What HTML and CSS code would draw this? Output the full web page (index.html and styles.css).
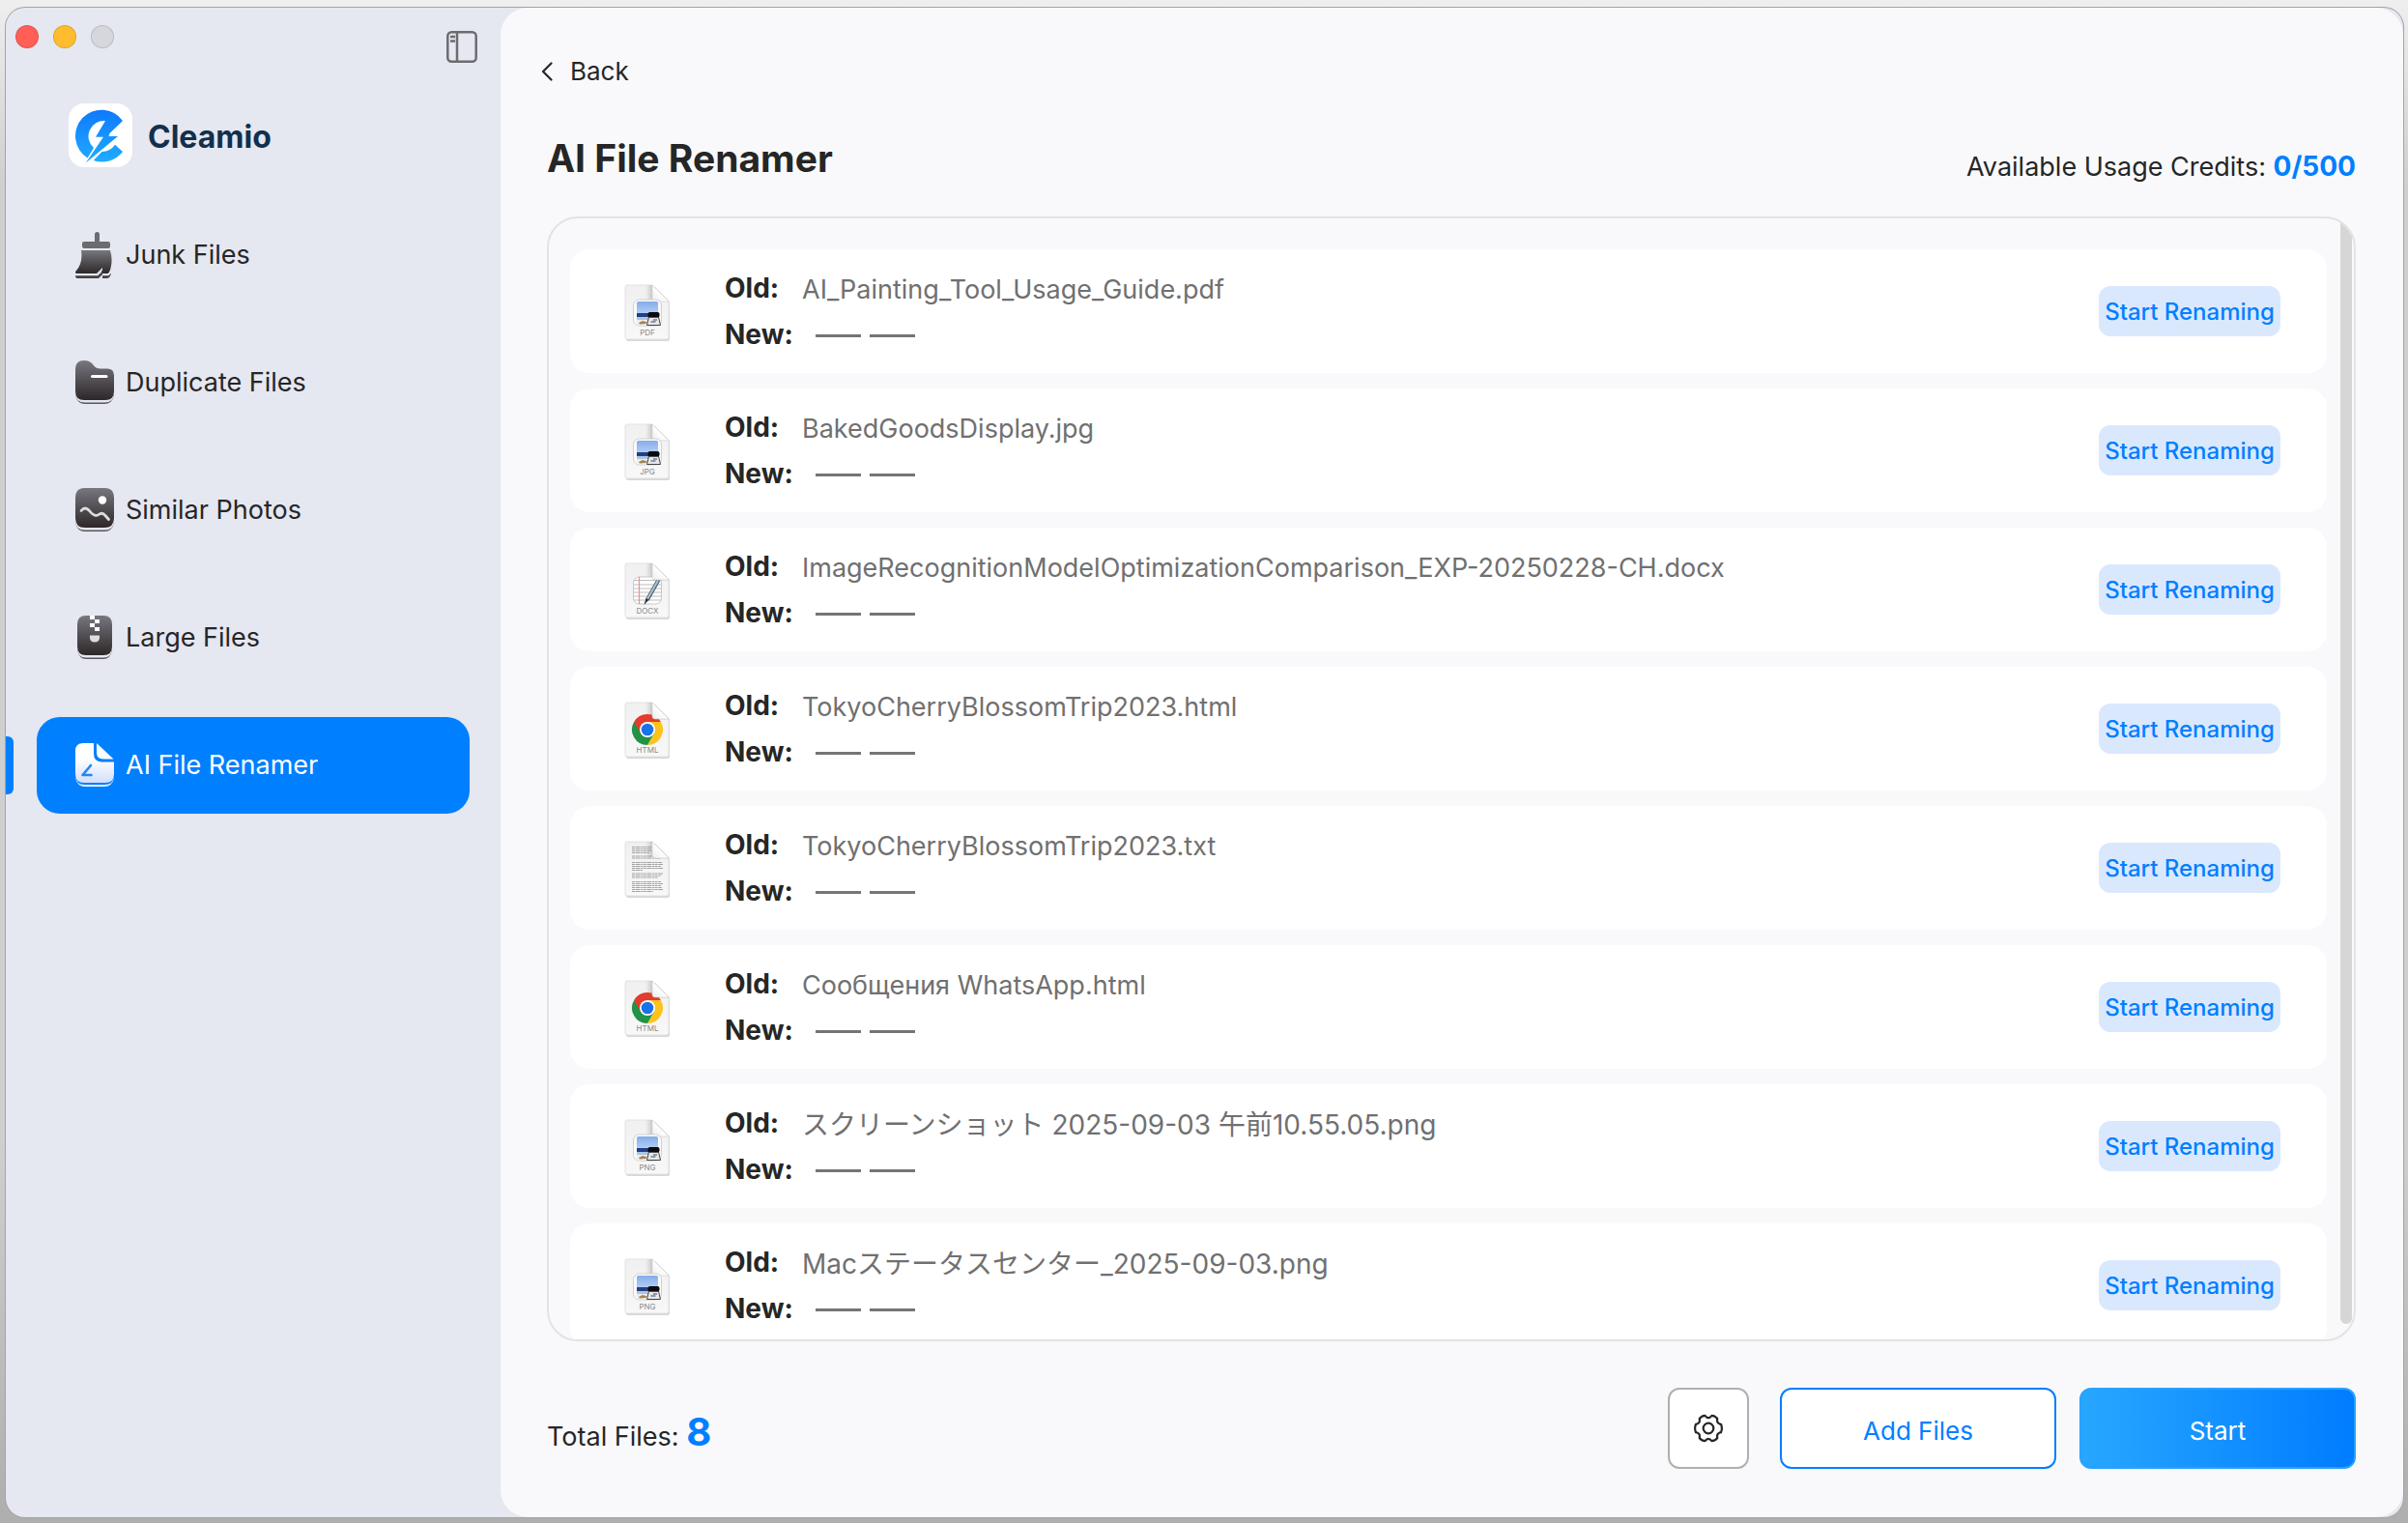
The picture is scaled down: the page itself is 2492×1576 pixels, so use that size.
FILE: index.html
```html
<!DOCTYPE html>
<html lang="en">
<head>
<meta charset="utf-8">
<title>Cleamio – AI File Renamer</title>
<link rel="stylesheet" href="styles.css">
</head>
<body>
<svg class="defs" aria-hidden="true">
  <defs>
    <linearGradient id="ink" x1="0" y1="0" x2="0" y2="1"><stop offset="0" stop-color="#77777f"/><stop offset="1" stop-color="#2d2728"/></linearGradient>
    <linearGradient id="snow" x1="0" y1="0" x2="0" y2="1"><stop offset="0" stop-color="#fff"/><stop offset=".4" stop-color="#fff"/><stop offset="1" stop-color="#d3defd"/></linearGradient>
    <linearGradient id="brand" gradientUnits="userSpaceOnUse" x1="0" y1="6" x2="0" y2="60"><stop offset="0" stop-color="#0f78fd"/><stop offset="1" stop-color="#1fabff"/></linearGradient>
    <linearGradient id="paper" x1="0" y1="0" x2="0" y2="1"><stop offset="0" stop-color="#f0f0f0"/><stop offset="1" stop-color="#f8f8f8"/></linearGradient>
    <linearGradient id="fold" x1="0" y1="1" x2="1" y2="0"><stop offset="0" stop-color="#ececec"/><stop offset=".5" stop-color="#fff"/></linearGradient>
    <linearGradient id="crease" x1="0" y1="0" x2="1" y2="0"><stop offset="0" stop-color="#bbb" stop-opacity="0"/><stop offset="1" stop-color="#aaa" stop-opacity=".6"/></linearGradient>
    <linearGradient id="sky" x1="0" y1="0" x2="0" y2="1"><stop offset="0" stop-color="#85acea"/><stop offset="1" stop-color="#b4d0f7"/></linearGradient>
  </defs>
  <symbol id="page" viewBox="0 0 48 62">
    <path d="M4 4h28l15 15v39a2 2 0 0 1-2 2H4a2 2 0 0 1-2-2V4z" fill="#bdbdbd" opacity=".6"/>
    <path d="M3 2h26l17 17v37a2 2 0 0 1-2 2H3a2 2 0 0 1-2-2V4a2 2 0 0 1 2-2z" fill="url(#paper)" stroke="#e2e2e2"/>
    <path d="M22 2h7v16h-7z" fill="url(#crease)"/>
    <path d="M29 2l17 17H32q-3 0-3-3z" fill="url(#fold)" stroke="#cfcfcf" stroke-width=".6"/>
  </symbol>
  <symbol id="file-image" viewBox="0 0 48 62">
    <use href="#page"/>
    <rect x="9.500" y="17" width="29" height="27" rx="6" fill="#fafafa" stroke="#c8c8c8" stroke-width=".8"/>
    <rect x="13" y="19" width="22" height="13" rx="1.500" fill="url(#sky)"/>
    <rect x="13" y="31" width="22" height="4.500" fill="#233f84"/>
    <rect x="13" y="35" width="22" height="3" fill="#a9c8e2"/>
    <path d="M13 38h22v5H15a2 2 0 0 1-2-2z" fill="#f1ede6"/>
    <path d="M15 41l4-2 5 1.500-2 1.500-6 .5z" fill="#a5835a"/>
    <path d="M25.500 35h10l2 8.500H23.500z" fill="#e8e8ea" stroke="#444" stroke-width="1"/>
    <rect x="24.500" y="30" width="12" height="5.500" rx="2" fill="#0b0b0d"/>
    <path d="M27.500 40h5M30 38h4" stroke="#33477a" stroke-width="1"/>
  </symbol>
  <symbol id="file-doc" viewBox="0 0 48 62">
    <use href="#page"/>
    <rect x="9.500" y="16" width="29" height="28" rx="6" fill="#fff" stroke="#bbb" stroke-width=".8"/>
    <path d="M10 19.500h28M10 24h28M10 28h28M10 32h28M10 36h28M10 40h28" stroke="#b5b5b9" stroke-width=".9"/>
    <path d="M15.500 16v28" stroke="#ee8f8c" stroke-width="1.200"/>
    <path d="M35.500 19L24 39.500" stroke="#4f5d68" stroke-width="4"/>
    <path d="M35 19.500L24 39" stroke="#a9c5d6" stroke-width="2"/>
    <path d="M22.500 38l3 1.800L20.500 45z" fill="#333"/>
    <path d="M29 2l17 17H32q-3 0-3-3z" fill="url(#fold)" stroke="#cfcfcf" stroke-width=".6"/>
  </symbol>
  <symbol id="file-html" viewBox="0 0 48 62">
    <use href="#page"/>
    <path d="M24 22h13.860A16 16 0 0 1 24 46l6.930-12z" fill="#fcc31e"/>
    <path d="M10.140 22A16 16 0 0 0 24 46l6.930-12L24 30z" fill="#219246"/>
    <path d="M10.140 22A16 16 0 0 1 37.860 22H24v8l-6.930 4z" fill="#e33b2e"/>
    <circle cx="24" cy="30" r="8" fill="#fff"/>
    <circle cx="24" cy="30" r="6.300" fill="#1a72e8"/>
    <path d="M29 2l17 17H32q-3 0-3-3z" fill="url(#fold)" stroke="#cfcfcf" stroke-width=".6"/>
  </symbol>
  <symbol id="file-text" viewBox="0 0 48 62">
    <use href="#page"/>
    <g stroke="#a2a2a2" stroke-width="1.100" stroke-dasharray="3 .6 5 .7 2 .5">
      <path d="M8 7.500h21M8 9.500h20M8 11.500h21M8 13.500h18M8 17h28M8 19h29"/>
      <path d="M8 23.500h31M8 25.500h32M8 27.500h30M8 29.500h32M8 31.500h11M8 35h32M8 37h30M8 39h27"/>
      <path d="M8 43.500h30M8 45.500h32M8 47.500h30M8 49.500h31M8 51.500h32M8 53.500h22"/>
    </g>
    <path d="M29 2l17 17H32q-3 0-3-3z" fill="url(#fold)" stroke="#cfcfcf" stroke-width=".6"/>
  </symbol>
</svg>

<div class="window">
  <aside class="sidebar">
    <div class="titlebar">
      <div class="lights"><span class="light red"></span><span class="light amber"></span><span class="light off"></span></div>
      <button class="toggle" aria-label="Toggle sidebar">
        <svg width="32" height="33" viewBox="0 0 32 33" fill="none" stroke="#6c6c6e" stroke-width="2.500"><rect x="1.300" y="1.300" width="29.400" height="30.400" rx="4"/><path d="M11 1v31"/><path d="M4 6h5M4 10.500h5"/></svg>
      </button>
    </div>
    <div class="brand">
      <span class="logo">
        <svg width="66" height="66" viewBox="0 0 66 66" fill="url(#brand)">
          <path d="M56 18A27 27 0 1 0 19.600 56.500L26 46A16 16 0 0 1 38 18L28 34.700H36L17.600 61.700L51 34H41.500L42.500 31z"/>
          <path d="M25.700 59L34.500 50Q43 50 48 42.800L56 50A27 27 0 0 1 25.700 59z"/>
        </svg>
      </span>
      <span class="brand-name">Cleamio</span>
    </div>
    <nav class="nav">
      <a href="#junk" class="nav-item">
        <svg width="40" height="48" viewBox="0 0 40 48" fill="url(#ink)"><path d="M20 2.500a2.500 2.500 0 0 1 5 0V10h9q2 0 2 2v3q0 2-2 2H9q-2 0-2-2v-3q0-2 2-2h11z" fill="#6b6b72"/><path d="M6 19h30q2.500 8 1 16-1 6-3 8h-6v-6l-6 6H1q-2-1 0-3 7-8 5-21z"/><path d="M0 44.500h22l6-5v5h7l2-2q-1 5-4 5.500h-5v-4l-4 4H2q-2 0-2-3.500z" fill="#444044"/><path d="M0 44.500h23l4-4M28 44.500h6l3-4" fill="none" stroke="#e5e7f1" stroke-width="1.500"/></svg>
        Junk Files
      </a>
      <a href="#duplicates" class="nav-item">
        <svg width="40" height="46" viewBox="0 0 40 46"><path d="M0 36q2 9 10 9h20q8 0 10-9z" fill="#5a5558"/><path d="M0 34q0 9.500 10 9.500h20q10 0 10-9.500z" fill="#e5e7f1"/><path d="M0 9q0-9 9-9 6 0 9 4 3 4.500 8 4.500h7q7 0 7 7V32q0 9-9 9H9q-9 0-9-9z" fill="url(#ink)"/><path d="M17.500 16.500h14.500" stroke="#fff" stroke-width="3" stroke-linecap="round"/></svg>
        Duplicate Files
      </a>
      <a href="#photos" class="nav-item">
        <svg width="40" height="46" viewBox="0 0 40 46"><path d="M0 36q2 9 10 9h20q8 0 10-9z" fill="#5a5558"/><path d="M0 34q0 9.500 10 9.500h20q10 0 10-9.500z" fill="#e5e7f1"/><path d="M0 10Q0 0 10 0h20q10 0 10 10v21q0 10-10 10H10Q0 41 0 31z" fill="url(#ink)"/><circle cx="28" cy="12.500" r="4.200" fill="#fff"/><path d="M6 23.500q4-5 8.500 0 5.500 7 9.500 4 4-3 7 1l3.500 4" fill="none" stroke="#ddd" stroke-width="2.800" stroke-linecap="round"/></svg>
        Similar Photos
      </a>
      <a href="#large" class="nav-item">
        <svg width="40" height="46" viewBox="0 0 40 46"><path d="M2 36q2 9 9 9h18q7 0 9-9z" fill="#5a5558"/><path d="M2 34q0 9.500 9 9.500h18q9 0 9-9.500z" fill="#e5e7f1"/><path d="M2 9q0-9 9-9h18q9 0 9 9v23q0 9-9 9H11q-9 0-9-9z" fill="url(#ink)"/><path d="M15 0h5v4h-5zM20 4h5v4h-5zM15 8h5v4h-5zM20 12h5v4h-5z" fill="#fff"/><path d="M15 20.500h10v2q0 5-5 5t-5-5z" fill="#ddd"/></svg>
        Large Files
      </a>
      <a href="#renamer" class="nav-item active" aria-current="page">
        <svg width="40" height="46" viewBox="0 0 40 46"><path d="M0 36q2 9 10 9h20q8 0 10-9z" fill="#e8efff"/><path d="M0 33q0 10 10 10h20q10 0 10-10z" fill="#007fff"/><path d="M0 8q0-8 8-8h11v11q0 8 8 8.500h13V32q0 9-9 9H9q-9 0-9-9z" fill="url(#snow)"/><path d="M22 0l17.500 16.500H29q-7 0-7-7z" fill="#fff"/><path d="M16 23L7.500 33h9" fill="none" stroke="#2187f7" stroke-width="2.600" stroke-linecap="round" stroke-linejoin="round"/></svg>
        AI File Renamer
      </a>
    </nav>
  </aside>

  <main class="main">
    <button class="back">
      <svg width="12" height="20" viewBox="0 0 12 20" fill="none" stroke="#262626" stroke-width="2.200" stroke-linecap="round" stroke-linejoin="round"><path d="M10.500 1.500L2 10l8.500 8.500"/></svg>
      Back
    </button>
    <header class="header">
      <h1>AI File Renamer</h1>
      <p class="credits">Available Usage Credits: <strong>0/500</strong></p>
    </header>

    <section class="list" aria-label="Files">
      <ul class="rows">
        <li class="row"><span class="file"><svg width="48" height="62"><use href="#file-image"/></svg><span class="ext">PDF</span></span><dl><dt>Old:</dt><dd>AI_Painting_Tool_Usage_Guide.pdf</dd><dt>New:</dt><dd class="blank"><i></i><i></i></dd></dl><button class="rename">Start Renaming</button></li>
        <li class="row"><span class="file"><svg width="48" height="62"><use href="#file-image"/></svg><span class="ext">JPG</span></span><dl><dt>Old:</dt><dd>BakedGoodsDisplay.jpg</dd><dt>New:</dt><dd class="blank"><i></i><i></i></dd></dl><button class="rename">Start Renaming</button></li>
        <li class="row"><span class="file"><svg width="48" height="62"><use href="#file-doc"/></svg><span class="ext">DOCX</span></span><dl><dt>Old:</dt><dd>ImageRecognitionModelOptimizationComparison_EXP-20250228-CH.docx</dd><dt>New:</dt><dd class="blank"><i></i><i></i></dd></dl><button class="rename">Start Renaming</button></li>
        <li class="row"><span class="file"><svg width="48" height="62"><use href="#file-html"/></svg><span class="ext">HTML</span></span><dl><dt>Old:</dt><dd>TokyoCherryBlossomTrip2023.html</dd><dt>New:</dt><dd class="blank"><i></i><i></i></dd></dl><button class="rename">Start Renaming</button></li>
        <li class="row"><span class="file"><svg width="48" height="62"><use href="#file-text"/></svg></span><dl><dt>Old:</dt><dd>TokyoCherryBlossomTrip2023.txt</dd><dt>New:</dt><dd class="blank"><i></i><i></i></dd></dl><button class="rename">Start Renaming</button></li>
        <li class="row"><span class="file"><svg width="48" height="62"><use href="#file-html"/></svg><span class="ext">HTML</span></span><dl><dt>Old:</dt><dd>Сообщения WhatsApp.html</dd><dt>New:</dt><dd class="blank"><i></i><i></i></dd></dl><button class="rename">Start Renaming</button></li>
        <li class="row"><span class="file"><svg width="48" height="62"><use href="#file-image"/></svg><span class="ext">PNG</span></span><dl><dt>Old:</dt><dd lang="ja">スクリーンショット 2025-09-03 午前10.55.05.png</dd><dt>New:</dt><dd class="blank"><i></i><i></i></dd></dl><button class="rename">Start Renaming</button></li>
        <li class="row"><span class="file"><svg width="48" height="62"><use href="#file-image"/></svg><span class="ext">PNG</span></span><dl><dt>Old:</dt><dd lang="ja">Macステータスセンター_2025-09-03.png</dd><dt>New:</dt><dd class="blank"><i></i><i></i></dd></dl><button class="rename">Start Renaming</button></li>
      </ul>
      <div class="scrollbar"></div>
    </section>

    <footer class="footer">
      <p class="total">Total Files: <strong>8</strong></p>
      <button class="btn settings" aria-label="Settings">
        <svg width="30" height="30" viewBox="0 0 30 30" fill="none" stroke="#262626" stroke-width="2.200" stroke-linejoin="round"><circle cx="15" cy="15" r="5.300"/><path d="M11.500 1.800Q15 6.500 18.500 1.800Q22 2 24.300 5Q23 9.800 28 10.800Q29.800 15 28 19.200Q23 20.200 24.300 25Q22 28 18.500 28.200Q15 23.500 11.500 28.200Q8 28 5.700 25Q7 20.200 2 19.200Q.2 15 2 10.800Q7 9.800 5.700 5Q8 2 11.500 1.800z"/></svg>
      </button>
      <button class="btn add">Add Files</button>
      <button class="btn start">Start</button>
    </footer>
  </main>
</div>
</body>
</html>
```
FILE: styles.css
```css
* { box-sizing: border-box; }

body {
  margin: 0;
  min-height: 100vh;
  padding: 8px 5px 6px 6px;
  display: flex;
  background: linear-gradient(#efefef, #cfcfcf 12%, #cfcfcf 75%, #aeaeae);
  color: #262626;
  font-family: Inter, "Noto Sans CJK JP", sans-serif;
  font-size: 27px;
  line-height: 32px;
}

h1, p, ul, dl, dd { margin: 0; padding: 0; }

button {
  padding: 0;
  border: 0;
  background: none;
  color: inherit;
  font: inherit;
}

svg { display: block; flex: none; }

.defs { position: absolute; width: 0; height: 0; }

.window {
  flex: 1;
  display: flex;
  min-width: 0;
  border-radius: 20px;
  background: #e5e7f1;
  box-shadow: 0 0 0 1px #a4a4a6;
  overflow: hidden;
}

/* Sidebar */
.sidebar { width: 512px; flex: none; }

.titlebar {
  display: flex;
  justify-content: space-between;
  align-items: flex-start;
  padding: 18px 24px 0 10px;
}

.lights { display: flex; gap: 15px; }

.light {
  width: 24px;
  height: 24px;
  border: 1px solid rgb(0 0 0 / 12%);
  border-radius: 50%;
}

.red { background: #ff5f57; }
.amber { background: #febc2e; }
.off { background: #d6d7dc; }

.toggle { margin-top: 6px; }

.brand {
  display: flex;
  align-items: center;
  gap: 16px;
  padding: 42px 0 0 65px;
}

.logo {
  border-radius: 16px;
  background: #fff;
}

.brand-name {
  padding-top: 4px;
  color: #12304d;
  font-size: 32px;
  font-weight: 700;
  line-height: 40px;
}

.nav {
  display: flex;
  flex-direction: column;
  gap: 32px;
  padding: 41px 32px 0;
}

.nav-item {
  display: flex;
  align-items: center;
  gap: 12px;
  height: 100px;
  padding-left: 40px;
  border-radius: 24px;
  color: inherit;
  text-decoration: none;
}

.active {
  position: relative;
  background: #007fff;
  color: #fff;
}

.active::before {
  content: "";
  position: absolute;
  left: -32px;
  top: 20px;
  width: 8px;
  height: 60px;
  border-radius: 0 6px 6px 0;
  background: #007fff;
}

/* Main panel */
.main {
  flex: 1;
  min-width: 0;
  display: flex;
  flex-direction: column;
  padding: 50px 49px 50px 48px;
  border-radius: 28px;
  background: #f9f9fb;
}

.back {
  align-self: flex-start;
  display: flex;
  align-items: center;
  gap: 18px;
  margin-left: -6px;
  font-size: 26px;
}

.header {
  display: flex;
  justify-content: space-between;
  align-items: flex-end;
  margin: 48px 0 34px;
}

h1 {
  font-size: 39px;
  line-height: 52px;
}

.credits { padding-bottom: 1px; }

.credits strong {
  color: #007fff;
  font-size: 28px;
}

.list {
  display: flex;
  gap: 14px;
  flex: 1 1 0;
  min-height: 0;
  border: 2px solid #e3e3e4;
  border-radius: 32px;
  padding: 0 2px 0 22px;
  overflow: hidden;
}

.rows {
  flex: 1;
  min-width: 0;
  display: flex;
  flex-direction: column;
  gap: 16px;
  padding-top: 32px;
  list-style: none;
}

.scrollbar {
  width: 12px;
  margin-bottom: 16px;
  border-radius: 0 0 6px 6px;
  background: #d6d6d6;
}

.row {
  display: flex;
  align-items: center;
  flex: none;
  height: 128px;
  padding: 0 48px 0 56px;
  border-radius: 20px;
  background: #fff;
}

.file {
  position: relative;
  padding-top: 4px;
}

.ext {
  position: absolute;
  inset: 50px 0 auto;
  color: #8a8a8a;
  font-size: 8px;
  line-height: 10px;
  text-align: center;
}

.row dl {
  flex: 1;
  min-width: 0;
  display: grid;
  grid-template-columns: 80px 1fr;
  row-gap: 14px;
  margin-left: 56px;
}

.row dt {
  font-size: 28px;
  font-weight: 700;
}

.row dd {
  padding-top: 2px;
  color: #707070;
}

.row dd:lang(ja) { font-size: 28px; }

.row .blank {
  display: flex;
  align-items: center;
  gap: 9px;
  padding-left: 14px;
}

.blank i {
  width: 47px;
  height: 3px;
  background: #757575;
}

.rename {
  width: 188px;
  height: 52px;
  padding-top: 2px;
  border-radius: 12px;
  background: #dae8fe;
  color: #007fff;
  font-size: 24px;
  font-weight: 500;
}

.footer {
  display: flex;
  align-items: center;
  margin-top: 48px;
}

.total {
  margin-right: auto;
  padding-top: 12px;
}

.total strong {
  color: #007fff;
  font-size: 40px;
}

.btn {
  width: 286px;
  height: 84px;
  padding-top: 6px;
  border: 2px solid #007fff;
  border-radius: 12px;
  background: #fff;
  font-size: 26px;
}

.settings {
  display: grid;
  place-items: center;
  width: 84px;
  margin-right: 32px;
  padding-top: 0;
  border-color: #b0b0b0;
}

.add {
  margin-right: 24px;
  color: #007fff;
}

.start {
  border-color: #28a2ff;
  background: linear-gradient(90deg, #28a7ff, #007cff);
  color: #fff;
}
```
